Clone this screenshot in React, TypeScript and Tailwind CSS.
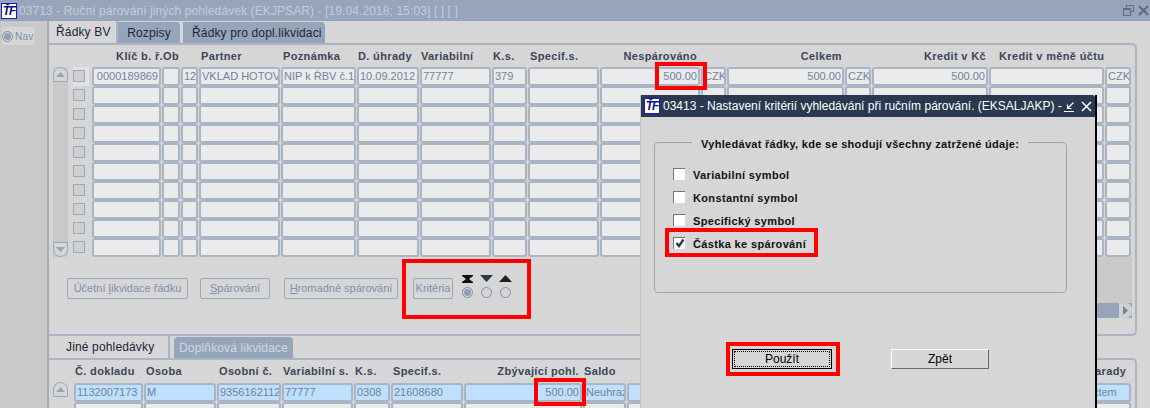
type Col = { w: string; text?: string; right?: boolean };

// upper grid
const upperCols: Col[] = [
  { w: 'w-[69px]', text: '0000189869', right: true },
  { w: 'w-[18px]' },
  { w: 'w-[17px]', text: '12' },
  { w: 'w-[81px]', text: 'VKLAD HOTOV' },
  { w: 'w-[75px]', text: 'NIP k ŘBV č.18' },
  { w: 'w-[62px]', text: '10.09.2012' },
  { w: 'w-[71px]', text: '77777' },
  { w: 'w-[35px]', text: '379' },
  { w: 'w-[71px]' },
  { w: 'w-[100px]', text: '500.00', right: true },
  { w: 'w-[25px]', text: 'CZK' },
  { w: 'w-[117px]', text: '500.00', right: true },
  { w: 'w-[26px]', text: 'CZK' },
  { w: 'w-[116px]', text: '500.00', right: true },
  { w: 'w-[115px]' },
  { w: 'w-[26px]', text: 'CZK' },
];

// lower grid
const lowerCols: Col[] = [
  { w: 'w-[69px]', text: '1132007173' },
  { w: 'w-[72px]', text: 'M' },
  { w: 'w-[64px]', text: '9356162112' },
  { w: 'w-[71px]', text: '77777' },
  { w: 'w-[36px]', text: '0308' },
  { w: 'w-[72px]', text: '21608680' },
  { w: 'w-[118px]', text: '500.00', right: true },
  { w: 'w-[43px]', text: 'Neuhraz' },
  { w: 'w-[454px]' },
  { w: 'w-[49px]', text: 'Účtem' },
];

const upperHeads = [
  { w: 'w-[69px] text-right', t: 'Klíč b. ř.' },
  { w: 'w-[19px]', t: 'Ob' },
  { w: 'w-[19px]', t: '' },
  { w: 'w-[82px]', t: 'Partner' },
  { w: 'w-[75px]', t: 'Poznámka' },
  { w: 'w-[63px]', t: 'D. úhrady' },
  { w: 'w-[72px]', t: 'Variabilní' },
  { w: 'w-[37px]', t: 'K.s.' },
  { w: 'w-[72px]', t: 'Specif.s.' },
  { w: 'w-[95px] text-right', t: 'Nespárováno' },
  { w: 'w-[145px] text-right', t: 'Celkem' },
  { w: 'w-[144px] text-right', t: 'Kredit v Kč' },
  { w: 'w-[130px] pl-[13px]', t: 'Kredit v měně účtu' },
];

const lowerHeads = [
  { w: 'w-[71px]', t: 'Č. dokladu' },
  { w: 'w-[73px]', t: 'Osoba' },
  { w: 'w-[64px]', t: 'Osobní č.' },
  { w: 'w-[72px]', t: 'Variabilní s.' },
  { w: 'w-[38px]', t: 'K.s.' },
  { w: 'w-[71px]', t: 'Specif.s.' },
  { w: 'w-[115px] text-right', t: 'Zbývající pohl.' },
  { w: 'w-[465px] pl-[5px]', t: 'Saldo' },
  { w: 'w-[73px] text-right', t: 'Způsob zarady' },
];

function Cell({ col, filled, blue }: { col: Col; filled: boolean; blue?: boolean }) {
  return (
    <div
      className={`${col.w} h-[19px] shrink-0 overflow-hidden whitespace-nowrap rounded-[3px] border-2 border-[#a9b4c4] px-[1px] text-[11px] leading-[15px] text-[#6f83a0] ${
        blue ? 'bg-[#bfdfff]' : 'bg-[#ebebeb]'
      } ${col.right ? 'text-right' : 'text-left'}`}
    >
      {filled ? col.text : ''}
    </div>
  );
}

function ScrollBtn({ up }: { up: boolean }) {
  return (
    <div
      className={`flex h-[15px] w-[15px] items-center justify-center border border-[#96a5ba] bg-[#d6d6d6] ${
        up ? 'rounded-t-[8px]' : 'rounded-b-[8px]'
      }`}
    >
      <svg width="9" height="5" viewBox="0 0 9 5">
        <path d={up ? 'M4.5 0L9 5H0z' : 'M0 0h9L4.5 5z'} fill="#96a5ba" />
      </svg>
    </div>
  );
}

function TifLogo() {
  return (
    <div className="flex h-[16px] w-[16px] shrink-0 items-center justify-center border border-[#1a1acc] bg-white text-[12px] font-bold italic leading-none tracking-[-1px] text-[#101080]">
      <span>ŤF</span>
    </div>
  );
}

function Radio({ on }: { on?: boolean }) {
  return (
    <div className="flex h-[11px] w-[11px] items-center justify-center rounded-full border border-[#7f8ea6] bg-[#d6d6d6]">
      {on && <div className="h-[7px] w-[7px] rounded-full bg-[#8fa0b8]" />}
    </div>
  );
}

function GhostButton({ label, hot, rest, w }: { label: string; hot: string; rest: string; w: string }) {
  return (
    <div className={`${w} flex h-[21px] shrink-0 items-center justify-center rounded-[2px] border border-[#9aa8bc] text-[11px] text-[#7e90aa]`}>
      <span className="whitespace-pre">
        {label}
        <span className="underline">{hot}</span>
        {rest}
      </span>
    </div>
  );
}

function Check({ checked, label }: { checked?: boolean; label: string }) {
  return (
    <div className="flex h-[23px] items-center">
      <div className="mb-[4px] ml-[18px] flex h-[12px] w-[12px] items-center justify-center border-t border-l border-[#6f7785] bg-white">
        {checked && (
          <svg width="10" height="10" viewBox="0 0 10 10">
            <path d="M1.5 5l2.5 3L8.5 1.5" fill="none" stroke="#2a3850" strokeWidth="2.4" />
          </svg>
        )}
      </div>
      <span className="ml-[8px] text-[11px] font-bold tracking-[0.35px] text-[#111]">{label}</span>
    </div>
  );
}

function RedBox({ className }: { className: string }) {
  return <div className={`absolute border-[4px] border-[#ff0000] ${className}`} />;
}

export default function App() {
  return (
    <div className="relative flex h-[408px] w-[1150px] flex-col overflow-hidden bg-[#d6d6d6] font-['Liberation_Sans',Arial,sans-serif]">
      {/* Title bar */}
      <div className="flex h-[21px] shrink-0 items-center bg-[#96a5ba] pl-[1px] pr-[1px]">
        <TifLogo />
        <span className="ml-[2px] whitespace-nowrap text-[12px] tracking-[0.1px] text-[#c4cdd9]">
          03713 - Ruční párování jiných pohledávek (EKJPSAR) - [19.04.2018; 15:03] [ ] [ ]
        </span>
        <div className="ml-auto flex items-center gap-[4px]">
          <svg width="11" height="11" viewBox="0 0 11 11" fill="none" stroke="#5e6b80" strokeWidth="1">
            <path d="M3.5 3V.5h7v6H8M.5 3.5h7v7h-7z" />
            <path d="M.5 4h7" strokeWidth="2" />
          </svg>
          <svg width="11" height="11" viewBox="0 0 11 11" fill="none" stroke="#5e6b80" strokeWidth="2">
            <path d="M1 1l9 9M10 1l-9 9" />
          </svg>
        </div>
      </div>

      <div className="flex min-h-0 flex-1">
        {/* Nav sidebar */}
        <div className="w-[49px] shrink-0 border-r-2 border-[#a0adc0] bg-[#c9c9c9] pt-[6px] pl-[2px]">
          <div className="flex h-[18px] w-[32px] items-center gap-[2px] bg-[#d6d6d6] text-[10px] tracking-[0.2px] text-[#7e90aa]">
            <Radio on />
            <span>Nav</span>
          </div>
        </div>

        <div className="flex min-w-0 flex-1 flex-col">
          {/* Upper tabs */}
          <div className="flex h-[22px] shrink-0 items-end text-[12px] tracking-[0.15px] text-[#1d2738]">
            <div className="flex h-[22px] w-[69px] items-center border-r-2 border-[#a9b4c4] pl-[7px]">Řádky BV</div>
            <div className="flex h-[21px] w-[62px] items-center justify-center rounded-tr-[4px] bg-[#96a5ba]">Rozpisy</div>
            <div className="ml-[3px] flex h-[21px] w-[142px] items-center rounded-tr-[4px] bg-[#96a5ba] pl-[9px]">Řádky pro dopl.likvidaci</div>
          </div>

          {/* Upper panel */}
          <div className="flex h-[293px] w-[1088px] shrink-0 flex-col rounded-tr-[5px] rounded-br-[5px] border-t-2 border-r-2 border-b-2 border-[#a9b4c4]">
            <div className="flex h-[22px] shrink-0 items-center whitespace-nowrap pl-[45px] text-[11px] font-bold tracking-[0.35px] text-[#3b4658]">
              {upperHeads.map((h, i) => (
                <div key={i} className={`${h.w} shrink-0`}>{h.t}</div>
              ))}
            </div>

            <div className="flex shrink-0">
              <div className="ml-[4px] flex h-[190px] w-[15px] flex-col justify-between bg-[#c9c9c9]">
                <ScrollBtn up />
                <ScrollBtn up={false} />
              </div>
              <div className="ml-[5px] flex flex-col">
                {Array.from({ length: 10 }).map((_, r) => (
                  <div key={r} className="flex h-[19px] items-start gap-[1px]">
                    <div className={`mr-[2px] h-[19px] w-[16px] pt-[3px] ${r === 0 ? 'bg-[#e2e2e2]' : ''}`}>
                      <div className="h-[12px] w-[12px] border border-[#9aa8bc] bg-[#d0d0d0]" />
                    </div>
                    {upperCols.map((c, i) => (
                      <Cell key={i} col={c} filled={r === 0} />
                    ))}
                  </div>
                ))}
              </div>
            </div>

            {/* Button row and, on the right, the end of the grid area */}
            <div className="flex h-[61px] shrink-0">
              <div className="flex items-start pt-[21px] pl-[18px]">
                <GhostButton w="w-[121px]" label="Účetní " hot="l" rest="ikvidace řádku" />
                <div className="ml-[12px]"><GhostButton w="w-[70px]" label="" hot="S" rest="párování" /></div>
                <div className="ml-[14px]"><GhostButton w="w-[114px]" label="" hot="H" rest="romadné spárování" /></div>
                <div className="ml-[15px]"><GhostButton w="w-[40px]" label="Kritéria" hot="" rest="" /></div>
                <div className="ml-[9px] -mt-[3px] flex gap-[8px]">
                  {['x', 'down', 'up'].map((k, i) => (
                    <div key={k} className="flex w-[11px] flex-col items-center gap-[4px]">
                      <svg width="13" height="8" viewBox="0 0 13 8" className="shrink-0">
                        {k === 'x' && <path d="M1 0h11v1L8 4l4 3v1H1V7l4-3-4-3z" fill="#111" />}
                        {k === 'down' && <path d="M0 0h13L6.5 7z" fill="#2a3850" />}
                        {k === 'up' && <path d="M6.5 0L13 7H0z" fill="#222" />}
                      </svg>
                      <Radio on={i === 0} />
                    </div>
                  ))}
                </div>
              </div>
              <div className="mr-[3px] ml-auto flex w-[300px] flex-col">
                <div className="h-[46px] bg-[#c9c9c9]" />
                <div className="flex h-[15px] justify-end bg-[#96a5ba]">
                  <div className="flex w-[13px] items-center justify-center rounded-r-[6px] bg-[#d0d0d0]">
                    <svg width="5" height="9" viewBox="0 0 5 9"><path d="M0 0l5 4.5L0 9z" fill="#6f83a0" /></svg>
                  </div>
                </div>
              </div>
            </div>
          </div>

          {/* Lower tabs */}
          <div className="flex h-[22px] shrink-0 items-end text-[12px] tracking-[0.15px]">
            <div className="flex h-[22px] w-[121px] items-center border-r-2 border-[#a9b4c4] pl-[17px] text-[#1d2738]">Jiné pohledávky</div>
            <div className="ml-[4px] flex h-[21px] w-[119px] items-center justify-center rounded-t-[4px] bg-[#96a5ba] text-[#d0d8e2]">Doplňková likvidace</div>
          </div>

          {/* Lower panel */}
          <div className="w-[1088px] flex-1 rounded-tr-[5px] border-t-2 border-r-2 border-[#a9b4c4]">
            <div className="flex h-[23px] items-center whitespace-nowrap pl-[26px] text-[11px] font-bold tracking-[0.35px] text-[#3b4658]">
              {lowerHeads.map((h, i) => (
                <div key={i} className={`${h.w} shrink-0`}>{h.t}</div>
              ))}
            </div>
            <div className="flex pl-[4px]">
              <div className="mr-[6px] -mt-[1px] w-[15px]"><ScrollBtn up /></div>
              <div className="flex flex-col">
                <div className="flex gap-[1px]">
                  {lowerCols.map((c, i) => (
                    <Cell key={i} col={c} filled blue />
                  ))}
                </div>
                <div className="flex gap-[1px]">
                  {lowerCols.map((c, i) => (
                    <Cell key={i} col={c} filled={false} />
                  ))}
                </div>
              </div>
            </div>
          </div>
        </div>
      </div>

      {/* Dialog */}
      <div className="absolute left-[640px] top-[95px] flex h-[320px] w-[457px] flex-col border-r-2 border-l border-r-black border-l-[#c4c4c4] bg-[#d6d6d6]">
        <div className="flex h-[22px] shrink-0 items-center rounded-tr-[3px] bg-[#2a3850] pl-[3px] pr-[3px]">
          <TifLogo />
          <span className="ml-[3px] whitespace-nowrap text-[12px] text-white">
            03413 - Nastavení kritérií vyhledávání při ručním párování. (EKSALJAKP) -
          </span>
          <div className="ml-auto flex items-center gap-[6px]">
            <svg width="11" height="11" viewBox="0 0 11 11" fill="none" stroke="#fff" strokeWidth="1.2">
              <path d="M9.5 1.5L3.5 7.5M3.5 3.5v4h4M0 10.5h10" />
            </svg>
            <svg width="11" height="11" viewBox="0 0 11 11" fill="none" stroke="#fff" strokeWidth="1.6">
              <path d="M1 1l9 9M10 1l-9 9" />
            </svg>
          </div>
        </div>

        <div className="relative mx-[13px] mt-[25px] h-[151px] w-[413px] shrink-0 rounded-[4px] border border-[#96a5ba] pt-[21px]">
          <div className="absolute -top-[7px] left-[37px] whitespace-nowrap bg-[#d6d6d6] px-[9px] text-[11px] font-bold tracking-[0.3px] text-[#111]">
            Vyhledávat řádky, kde se shodují všechny zatržené údaje:
          </div>
          <Check label="Variabilní symbol" />
          <Check label="Konstantní symbol" />
          <Check label="Specifický symbol" />
          <Check checked label="Částka ke spárování" />
        </div>

        <div className="mt-[56px] flex items-start pl-[91px]">
          <div className="flex h-[20px] w-[100px] items-center justify-center border border-black bg-[#d6d6d6] text-[12px] text-black outline-1 -outline-offset-3 outline-dotted outline-black">
            Použít
          </div>
          <div className="ml-[59px] flex h-[20px] w-[98px] items-center justify-center rounded-[1px] border border-t-white border-l-white border-r-[#5e6b80] border-b-[#5e6b80] text-[12px] text-black">
            Zpět
          </div>
        </div>
      </div>

      {/* Red highlights */}
      <RedBox className="left-[655px] top-[62px] h-[28px] w-[52px]" />
      <RedBox className="left-[402px] top-[259px] h-[60px] w-[129px]" />
      <RedBox className="left-[665px] top-[228px] h-[29px] w-[153px]" />
      <RedBox className="left-[726px] top-[342px] h-[34px] w-[114px]" />
      <RedBox className="left-[534px] top-[378px] h-[28px] w-[52px]" />
    </div>
  );
}
